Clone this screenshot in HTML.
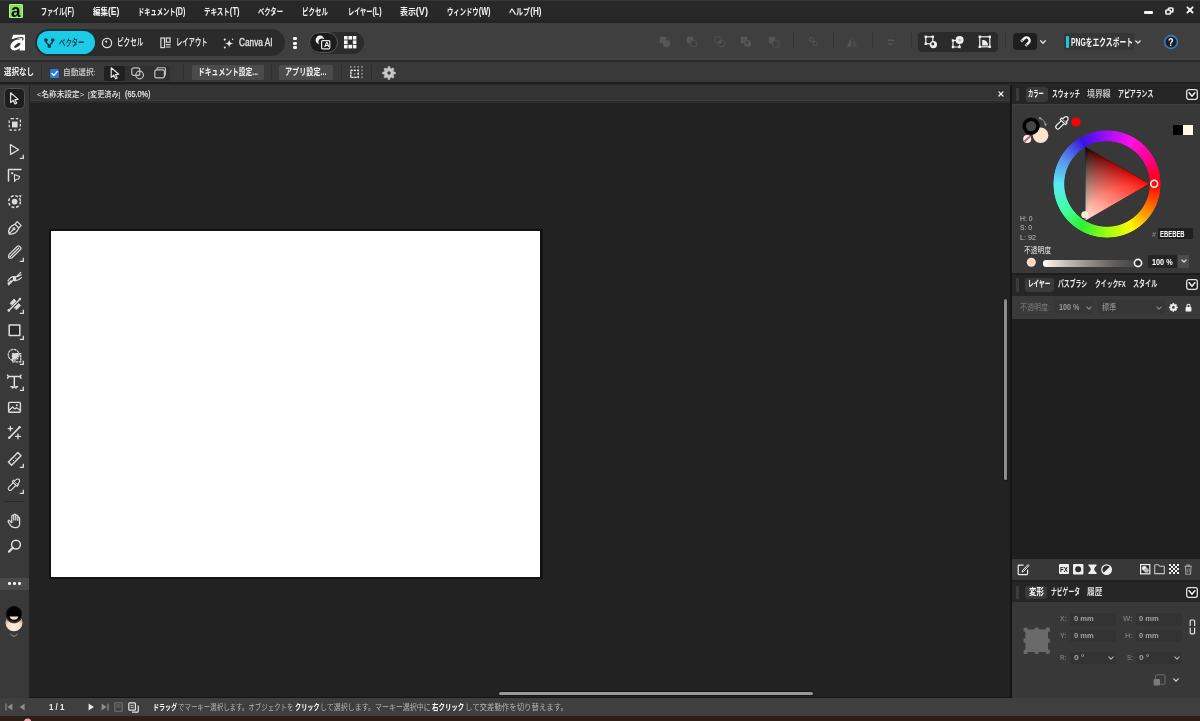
<!DOCTYPE html>
<html lang="ja">
<head>
<meta charset="utf-8">
<title>Affinity</title>
<style>
*{box-sizing:border-box;margin:0;padding:0}
html,body{width:1200px;height:721px;overflow:hidden;background:#222}
body{position:relative;font-family:"Liberation Sans","Noto Sans CJK JP",sans-serif;color:#e6e6e6;font-size:10px;line-height:1}
.a{position:absolute}
.t{position:absolute;white-space:nowrap;transform-origin:0 50%;display:block}
svg{position:absolute;overflow:visible}

</style>
</head>
<body>
<!-- main blocks -->
<div class="a" style="left:0px;top:0px;width:1200px;height:23px;background:#282828;"></div>
<div class="a" style="left:0px;top:0px;width:1200px;height:1px;background:#363636;"></div>
<div class="a" style="left:0px;top:19.5px;width:1200px;height:3.5px;background:#242424;"></div>
<div class="a" style="left:0px;top:23px;width:1200px;height:38px;background:#3f3f3f;"></div>
<div class="a" style="left:0px;top:58px;width:1200px;height:1.6px;background:#444444;"></div>
<div class="a" style="left:0px;top:60.2px;width:1200px;height:1.8px;background:#2b2b2b;"></div>
<div class="a" style="left:0px;top:62px;width:1200px;height:20.2px;background:#393939;"></div>
<div class="a" style="left:0px;top:82px;width:1200px;height:1.6px;background:#1e1e1e;"></div>
<div class="a" style="left:0px;top:83.6px;width:1200px;height:1.4px;background:#2a2a2a;"></div>
<div class="a" style="left:0px;top:85px;width:28.5px;height:612.5px;background:#393939;"></div>
<div class="a" style="left:28.5px;top:85px;width:1px;height:612.5px;background:#232323;"></div>
<div class="a" style="left:29.5px;top:85px;width:980px;height:18px;background:#333333;"></div>
<div class="a" style="left:29.5px;top:99.8px;width:980px;height:1.6px;background:#3a3a3a;"></div>
<div class="a" style="left:29.5px;top:101.4px;width:980px;height:1.6px;background:#2b2b2b;"></div>
<div class="a" style="left:29.5px;top:103px;width:980px;height:594.5px;background:#222222;"></div>
<div class="a" style="left:1009.5px;top:85px;width:2.5px;height:612.5px;background:#151515;"></div>
<div class="a" style="left:1011.8px;top:85px;width:188.2px;height:612.5px;background:#383838;"></div>
<div class="a" style="left:0px;top:697.5px;width:1200px;height:18.5px;background:#3f3f3f;"></div>
<div class="a" style="left:0px;top:715.6px;width:1200px;height:5.4px;background:#2f1e14;"></div>
<div class="a" style="left:49.1px;top:229px;width:493.8px;height:350px;background:#121212;"></div>
<div class="a" style="left:50.8px;top:230.5px;width:489.5px;height:346.6px;background:#ffffff;"></div>
<!-- menu -->
<div class="a" style="left:9px;top:4px;width:13.7px;height:13.6px;background:#84e256;border-radius:1px;border:1px solid #b4f48c"></div>
<span class="t" style="left:11.3px;top:-2.30px;font-size:17.6px;line-height:26.400000000000002px;color:#060606;font-weight:700;transform:scaleX(0.9697);">a</span>
<span class="t" style="left:41px;top:6.33px;font-size:9.3px;line-height:13.950000000000001px;color:#f2f2f2;font-weight:700;transform:scaleX(0.6477);">ファイル<span style="font-size:116%;line-height:1px">(F)</span></span>
<span class="t" style="left:93px;top:6.33px;font-size:9.3px;line-height:13.950000000000001px;color:#f2f2f2;font-weight:700;transform:scaleX(0.8038);">編集<span style="font-size:116%;line-height:1px">(E)</span></span>
<span class="t" style="left:138px;top:6.33px;font-size:9.3px;line-height:13.950000000000001px;color:#f2f2f2;font-weight:700;transform:scaleX(0.6714);">ドキュメント<span style="font-size:116%;line-height:1px">(D)</span></span>
<span class="t" style="left:204px;top:6.33px;font-size:9.3px;line-height:13.950000000000001px;color:#f2f2f2;font-weight:700;transform:scaleX(0.7006);">テキスト<span style="font-size:116%;line-height:1px">(T)</span></span>
<span class="t" style="left:258px;top:6.33px;font-size:9.3px;line-height:13.950000000000001px;color:#f2f2f2;font-weight:700;transform:scaleX(0.6788);">ベクター</span>
<span class="t" style="left:302px;top:6.33px;font-size:9.3px;line-height:13.950000000000001px;color:#f2f2f2;font-weight:700;transform:scaleX(0.6989);">ピクセル</span>
<span class="t" style="left:347.5px;top:6.33px;font-size:9.3px;line-height:13.950000000000001px;color:#f2f2f2;font-weight:700;transform:scaleX(0.6611);">レイヤー<span style="font-size:116%;line-height:1px">(L)</span></span>
<span class="t" style="left:400px;top:6.33px;font-size:9.3px;line-height:13.950000000000001px;color:#f2f2f2;font-weight:700;transform:scaleX(0.8493);">表示<span style="font-size:116%;line-height:1px">(V)</span></span>
<span class="t" style="left:446.5px;top:6.33px;font-size:9.3px;line-height:13.950000000000001px;color:#f2f2f2;font-weight:700;transform:scaleX(0.6814);">ウィンドウ<span style="font-size:116%;line-height:1px">(W)</span></span>
<span class="t" style="left:508.5px;top:6.33px;font-size:9.3px;line-height:13.950000000000001px;color:#f2f2f2;font-weight:700;transform:scaleX(0.7583);">ヘルプ<span style="font-size:116%;line-height:1px">(H)</span></span>
<div class="a" style="left:1144.2px;top:11.2px;width:8.6px;height:2.7px;background:#f4f4f4;border-radius:1px"></div>
<svg style="left:1164px;top:5.6px" width="11" height="9" viewBox="0 0 11 9"><rect x="4.3" y="2" width="4.6" height="4" rx="1.1" fill="none" stroke="#f0f0f0" stroke-width="1.7"/><rect x="1.9" y="4" width="4.6" height="4" rx="1.1" fill="#282828" stroke="#f0f0f0" stroke-width="1.7"/></svg>
<svg style="left:1185px;top:5px" width="10" height="10" viewBox="0 0 10 10"><path d="M2.4 2.3 L7.6 7.5 M7.6 2.3 L2.4 7.5" stroke="#f4f4f4" stroke-width="1.8" stroke-linecap="round"/></svg>
<!-- toolbar -->
<svg style="left:9px;top:34px" width="17" height="17" viewBox="0 0 17 17"><g transform="translate(-9 -34)"><path d="M13.2 34.7 H25 V50.5 H19.6 V39 H11.6 Z" fill="#fff"/><ellipse cx="16.3" cy="45" rx="6.5" ry="4.7" transform="rotate(-36 16.3 45)" fill="#fff"/><ellipse cx="17.3" cy="45.3" rx="3.7" ry="1.45" transform="rotate(-36 17.3 45.3)" fill="#303030"/><path d="M11.4 41.6 C13.4 38.8 17.6 37.7 21.4 37.5 C23 37.5 23.6 38.6 22.6 39.8" fill="none" stroke="#303030" stroke-width="1.15" stroke-linecap="round"/></g></svg>
<div class="a" style="left:35px;top:28.5px;width:250px;height:27.8px;background:#2b2b2b;border-radius:14px"></div>
<div class="a" style="left:36px;top:30px;width:60px;height:25px;background:#12323a;border-radius:12.5px"></div>
<div class="a" style="left:37px;top:31px;width:58px;height:23px;background:#1ccbe8;border-radius:11.5px"></div>
<svg style="left:44px;top:38.4px" width="11" height="11" viewBox="0 0 11 11"><g fill="none" stroke="#0c3a46" stroke-width="1.4"><path d="M1.9 2.4 C1.9 6.6 5.3 5.6 5.3 8.2 C5.3 5.6 8.7 6.6 8.7 2.4"/></g><g fill="#0c3a46"><rect x="0.2" y="0.4" width="3.4" height="3.2" rx="0.8"/><rect x="7" y="0.4" width="3.4" height="3.2" rx="0.8"/><rect x="3.6" y="6.6" width="3.4" height="3.2" rx="0.8"/></g></svg>
<span class="t" style="left:59.2px;top:35.60px;font-size:9.6px;line-height:14.399999999999999px;color:#0c4250;font-weight:700;transform:scaleX(0.6684);">ベクター</span>
<svg style="left:101px;top:37px" width="12" height="12" viewBox="0 0 12 12"><circle cx="6" cy="6" r="4.6" fill="none" stroke="#dcdcdc" stroke-width="1.3"/><path d="M6 6 L6 3.4 A2.6 2.6 0 0 0 3.7 4.8 Z" fill="#dcdcdc"/></svg>
<span class="t" style="left:117px;top:35.10px;font-size:10px;line-height:15.0px;color:#dedede;font-weight:700;transform:scaleX(0.6625);">ピクセル</span>
<svg style="left:160px;top:37px" width="11" height="12" viewBox="0 0 11 12"><rect x="0.9" y="1" width="3.6" height="9.6" fill="none" stroke="#dcdcdc" stroke-width="1.2"/><rect x="6.3" y="1" width="3.8" height="4.2" fill="none" stroke="#dcdcdc" stroke-width="1.2"/><path d="M5.8 7.6 H10.6 M5.8 10 H10.6" stroke="#dcdcdc" stroke-width="1.2"/></svg>
<span class="t" style="left:175.5px;top:35.10px;font-size:10px;line-height:15.0px;color:#dedede;font-weight:700;transform:scaleX(0.6300);">レイアウト</span>
<svg style="left:223px;top:38px" width="11" height="11" viewBox="0 0 11 11"><path d="M6.2 1.2 C6.6 4 7.4 4.9 10.4 5.4 C7.4 5.9 6.6 6.8 6.2 9.8 C5.8 6.8 5 5.9 2 5.4 C5 4.9 5.8 4 6.2 1.2 Z" fill="#e4e4e4"/><circle cx="1.8" cy="1.6" r="1.1" fill="#e4e4e4"/><circle cx="1.8" cy="9.4" r="1" fill="#e4e4e4"/><circle cx="9.6" cy="1.2" r="0.7" fill="#e4e4e4"/></svg>
<span class="t" style="left:239px;top:35.05px;font-size:10.2px;line-height:15.299999999999999px;color:#e0e0e0;font-weight:400;transform:scaleX(0.8103);-webkit-text-stroke:0.35px #e0e0e0">Canva AI</span>
<div class="a" style="left:293.4px;top:37.1px;width:3.2px;height:3.2px;background:#f6f6f6;border-radius:1.2px"></div>
<div class="a" style="left:293.4px;top:41.5px;width:3.2px;height:3.2px;background:#f6f6f6;border-radius:1.2px"></div>
<div class="a" style="left:293.4px;top:45.9px;width:3.2px;height:3.2px;background:#f6f6f6;border-radius:1.2px"></div>
<div class="a" style="left:308.5px;top:31.5px;width:55.5px;height:22px;background:#2b2b2b;border-radius:11px"></div>
<div class="a" style="left:309px;top:32px;width:28.5px;height:21px;background:#1c1c1c;border-radius:10.5px;border:1px solid #5a5a5a"></div>
<svg style="left:314px;top:34px" width="18" height="17" viewBox="0 0 18 17"><circle cx="6" cy="6" r="4.4" fill="#f2f2f2"/><circle cx="8" cy="8" r="3.6" fill="#1c1c1c"/><rect x="7.6" y="6.6" width="8.2" height="8.2" rx="1" fill="#1c1c1c" stroke="#e8e8e8" stroke-width="1.2"/></svg>
<span class="t" style="left:323.7px;top:40.02px;font-size:6.5px;line-height:9.75px;color:#f0f0f0;font-weight:700;transform:scaleX(1.1907);">A</span>
<svg style="left:343.8px;top:36px" width="13" height="13" viewBox="0 0 13 13"><rect x="0.0" y="0.0" width="3.6" height="3.6" fill="#f4f4f4"/><rect x="4.4" y="0.0" width="3.6" height="3.6" fill="#f4f4f4"/><rect x="8.8" y="0.0" width="3.6" height="3.6" fill="#f4f4f4"/><rect x="0.0" y="4.4" width="3.6" height="3.6" fill="#f4f4f4"/><rect x="8.8" y="4.4" width="3.6" height="3.6" fill="#f4f4f4"/><rect x="0.0" y="8.8" width="3.6" height="3.6" fill="#f4f4f4"/><rect x="4.4" y="8.8" width="3.6" height="3.6" fill="#f4f4f4"/><rect x="8.8" y="8.8" width="3.6" height="3.6" fill="#f4f4f4"/></svg>
<svg style="left:656.5px;top:33.6px" width="16" height="16" viewBox="0 0 16 16"><g transform="translate(8 8) scale(.8) translate(-8 -8)"><rect x="1.5" y="1.5" width="8" height="8" rx="1" fill="#565656"/><circle cx="10" cy="10" r="4.6" fill="#565656"/></g></svg>
<svg style="left:684px;top:33.6px" width="16" height="16" viewBox="0 0 16 16"><g transform="translate(8 8) scale(.8) translate(-8 -8)"><rect x="1.5" y="1.5" width="8" height="8" rx="1" fill="#565656"/><circle cx="10" cy="10" r="4.2" fill="#3f3f3f" stroke="#565656" stroke-width="1"/></g></svg>
<svg style="left:711.5px;top:33.6px" width="16" height="16" viewBox="0 0 16 16"><g transform="translate(8 8) scale(.8) translate(-8 -8)"><rect x="1.5" y="1.5" width="8" height="8" rx="1" fill="none" stroke="#565656" stroke-width="1"/><circle cx="10" cy="10" r="4.2" fill="none" stroke="#565656" stroke-width="1"/><path d="M5.8 9.5 H9.5 V5.8 A4.2 4.2 0 0 0 5.8 9.5 Z" fill="#565656"/></g></svg>
<svg style="left:738px;top:33.6px" width="16" height="16" viewBox="0 0 16 16"><g transform="translate(8 8) scale(.8) translate(-8 -8)"><rect x="1.5" y="1.5" width="8" height="8" rx="1" fill="#565656"/><circle cx="10" cy="10" r="4.4" fill="#565656"/><circle cx="9" cy="8.6" r="2" fill="#3f3f3f"/></g></svg>
<svg style="left:766px;top:33.6px" width="16" height="16" viewBox="0 0 16 16"><g transform="translate(8 8) scale(.8) translate(-8 -8)"><rect x="1.5" y="1.5" width="8" height="8" rx="1" fill="#565656"/><rect x="6.5" y="6.5" width="8" height="8" rx="1" fill="#3f3f3f" stroke="#565656" stroke-width="1"/></g></svg>
<div class="a" style="left:793px;top:32px;width:1px;height:17px;background:#343434;"></div>
<div class="a" style="left:833px;top:32px;width:1px;height:17px;background:#343434;"></div>
<div class="a" style="left:872px;top:32px;width:1px;height:17px;background:#343434;"></div>
<div class="a" style="left:911px;top:32px;width:1px;height:17px;background:#343434;"></div>
<div class="a" style="left:1005px;top:32px;width:1px;height:17px;background:#343434;"></div>
<svg style="left:804.5px;top:33.6px" width="16" height="16" viewBox="0 0 16 16"><g transform="translate(8 8) scale(.8) translate(-8 -8)"><circle cx="6" cy="5" r="2.6" fill="none" stroke="#565656" stroke-width="1.2"/><circle cx="11" cy="10" r="2.6" fill="none" stroke="#565656" stroke-width="1.2"/><path d="M8 7 L9 8" stroke="#565656" stroke-width="1.2"/></g></svg>
<svg style="left:844px;top:33.6px" width="16" height="16" viewBox="0 0 16 16"><g transform="translate(8 8) scale(.8) translate(-8 -8)"><path d="M7 3 V14 H1.5 Z" fill="#565656"/><path d="M9.5 3 V14 H14.5 Z" fill="#4d4d4d"/></g></svg>
<svg style="left:883px;top:33.6px" width="16" height="16" viewBox="0 0 16 16"><g transform="translate(8 8) scale(.8) translate(-8 -8)"><path d="M4 6 H12 M4 10.5 H10" stroke="#565656" stroke-width="2"/></g></svg>
<div class="a" style="left:918px;top:32px;width:79.5px;height:19.5px;background:#2b2b2b;border-radius:4px"></div>
<svg style="left:924px;top:35px" width="14" height="14" viewBox="0 0 14 14"><rect x="1.8" y="1.8" width="7" height="7" fill="none" stroke="#efefef" stroke-width="1.2"/><g fill="#efefef"><rect x="0.6" y="0.6" width="2.4" height="2.4"/><rect x="7.6" y="0.6" width="2.4" height="2.4"/><rect x="0.6" y="7.6" width="2.4" height="2.4"/></g><circle cx="9.4" cy="9.6" r="3.6" fill="#efefef"/><circle cx="8.8" cy="9" r="1.4" fill="#2b2b2b"/></svg>
<svg style="left:951px;top:35px" width="14" height="14" viewBox="0 0 14 14"><path d="M2 5.5 H5 M2 5.5 V12 H8.5 V9.5" fill="none" stroke="#efefef" stroke-width="1.2"/><g fill="#efefef"><rect x="0.8" y="4.3" width="2.4" height="2.4"/><rect x="0.8" y="10.8" width="2.4" height="2.4"/><rect x="7.3" y="10.8" width="2.4" height="2.4"/></g><circle cx="8.6" cy="5" r="4" fill="#efefef"/><circle cx="8.6" cy="5" r="1.5" fill="#bdbdbd"/></svg>
<svg style="left:978px;top:35px" width="14" height="14" viewBox="0 0 14 14"><rect x="1.8" y="1.8" width="10" height="10" fill="none" stroke="#efefef" stroke-width="1.2"/><g fill="#efefef"><rect x="0.6" y="0.6" width="2.4" height="2.4"/><rect x="10.6" y="0.6" width="2.4" height="2.4"/><rect x="0.6" y="10.6" width="2.4" height="2.4"/><rect x="10.6" y="10.6" width="2.4" height="2.4"/></g><path d="M4.2 5 C8 5 10 7 10 10.6 H4.2 Z" fill="#efefef"/></svg>
<div class="a" style="left:1012.5px;top:32.5px;width:24px;height:17.5px;background:#1e1e1e;border-radius:4px"></div>
<svg style="left:1017px;top:34px" width="14" height="14" viewBox="0 0 14 14"><path d="M4.1 7.5 L7.3 4.3 A3.1 3.1 0 0 1 11.7 8.7 L8.5 11.9" fill="none" stroke="#efefef" stroke-width="2.5"/><path d="M4.2 5.6 L6.2 7.6 M8.4 9.8 L10.4 11.8" stroke="#1e1e1e" stroke-width="0.9"/></svg>
<svg style="left:1039.3px;top:37.7px" width="8" height="8" viewBox="0 0 8 8"><path d="M1.7000000000000002 2.85 L4 5.15 L6.3 2.85" fill="none" stroke="#dcdcdc" stroke-width="1.4" stroke-linecap="round" stroke-linejoin="round"/></svg>
<div class="a" style="left:1063.5px;top:32.5px;width:70.5px;height:17.5px;background:#363636;border-radius:2px"></div>
<div class="a" style="left:1065.5px;top:36px;width:3.2px;height:12px;background:#19c8e6;border-radius:1px"></div>
<span class="t" style="left:1070.5px;top:34.55px;font-size:10.2px;line-height:15.299999999999999px;color:#f4f4f4;font-weight:700;transform:scaleX(0.6660);">PNGをエクスポート</span>
<svg style="left:1134.3px;top:38px" width="8" height="8" viewBox="0 0 8 8"><path d="M1.7999999999999998 2.9 L4 5.1 L6.2 2.9" fill="none" stroke="#dcdcdc" stroke-width="1.4" stroke-linecap="round" stroke-linejoin="round"/></svg>
<svg style="left:1163px;top:34px" width="16" height="16" viewBox="0 0 16 16"><circle cx="8" cy="8" r="6.4" fill="#1e1e1e" stroke="#2f7fd8" stroke-width="1.6"/></svg>
<span class="t" style="left:1168.2px;top:34.60px;font-size:10px;line-height:15.0px;color:#ffffff;font-weight:700;transform:scaleX(0.9166);">?</span>
<!-- context bar -->
<span class="t" style="left:4px;top:66.40px;font-size:9.2px;line-height:13.799999999999999px;color:#f2f2f2;font-weight:700;transform:scaleX(0.8163);">選択なし</span>
<div class="a" style="left:41px;top:65px;width:1px;height:15px;background:#2e2e2e;"></div>
<div class="a" style="left:183px;top:65px;width:1px;height:15px;background:#2e2e2e;"></div>
<div class="a" style="left:271px;top:65px;width:1px;height:15px;background:#2e2e2e;"></div>
<div class="a" style="left:340.5px;top:65px;width:1px;height:15px;background:#2e2e2e;"></div>
<div class="a" style="left:371px;top:65px;width:1px;height:15px;background:#2e2e2e;"></div>
<div class="a" style="left:50px;top:69px;width:9px;height:9px;background:#2b7bd8;border-radius:1.5px"></div>
<svg style="left:50px;top:69px" width="9" height="9" viewBox="0 0 9 9"><path d="M2 4.6 L3.9 6.4 L7.2 2.6" fill="none" stroke="#fff" stroke-width="1.4" stroke-linecap="round" stroke-linejoin="round"/></svg>
<span class="t" style="left:62.7px;top:67.12px;font-size:8.1px;line-height:12.149999999999999px;color:#d4d4d4;font-weight:500;transform:scaleX(0.9444);">自動選択:</span>
<div class="a" style="left:104px;top:65.5px;width:66px;height:15px;background:#303030;border-radius:2px"></div>
<div class="a" style="left:104px;top:65.5px;width:21px;height:15px;background:#202020;border-radius:2px"></div>
<svg style="left:110px;top:67px" width="10" height="13" viewBox="0 0 10 13"><path d="M1.2 0.8 L1.2 10.4 L3.8 8.2 L5.6 11.8 L7.2 11 L5.5 7.6 L8.8 7.3 Z" fill="none" stroke="#e8e8e8" stroke-width="1.15" stroke-linejoin="round"/></svg>
<svg style="left:131px;top:66.5px" width="14" height="13" viewBox="0 0 14 13"><rect x="0.8" y="0.8" width="8" height="7.6" rx="2" fill="none" stroke="#c4c4c4" stroke-width="1.2"/><circle cx="8.6" cy="8" r="3.8" fill="none" stroke="#c4c4c4" stroke-width="1.2"/></svg>
<svg style="left:154px;top:67px" width="13" height="12" viewBox="0 0 13 12"><path d="M3 2.6 V1.6 Q3 0.8 3.8 0.8 H10.6 Q11.4 0.8 11.4 1.6 V8.6" fill="none" stroke="#c4c4c4" stroke-width="1.1"/><rect x="0.8" y="2.8" width="9.6" height="8" rx="1.6" fill="none" stroke="#c4c4c4" stroke-width="1.2"/></svg>
<div class="a" style="left:191.5px;top:65px;width:72.5px;height:14.5px;background:#4b4b4b;border-radius:1.5px"></div>
<span class="t" style="left:197.5px;top:65.40px;font-size:9.6px;line-height:14.399999999999999px;color:#f2f2f2;font-weight:700;transform:scaleX(0.7080);">ドキュメント設定...</span>
<div class="a" style="left:279px;top:65px;width:54px;height:14.5px;background:#4b4b4b;border-radius:1.5px"></div>
<span class="t" style="left:285px;top:65.40px;font-size:9.6px;line-height:14.399999999999999px;color:#f2f2f2;font-weight:700;transform:scaleX(0.7415);">アプリ設定...</span>
<svg style="left:350.3px;top:66.2px" width="13" height="12.5" viewBox="0 0 13 12.5"><rect x="0.0" y="0.0" width="1.7" height="1.7" fill="#8a8a8a"/><rect x="3.7" y="0.0" width="1.7" height="1.7" fill="#8a8a8a"/><rect x="7.4" y="0.0" width="1.7" height="1.7" fill="#8a8a8a"/><rect x="11.1" y="0.0" width="1.7" height="1.7" fill="#8a8a8a"/><rect x="0.0" y="3.5" width="1.7" height="1.7" fill="#8a8a8a"/><rect x="3.7" y="3.5" width="1.7" height="1.7" fill="#8a8a8a"/><rect x="7.4" y="3.5" width="1.7" height="1.7" fill="#8a8a8a"/><rect x="11.1" y="3.5" width="1.7" height="1.7" fill="#8a8a8a"/><rect x="0.0" y="7.0" width="1.7" height="1.7" fill="#8a8a8a"/><rect x="3.7" y="7.0" width="1.7" height="1.7" fill="#8a8a8a"/><rect x="7.4" y="7.0" width="1.7" height="1.7" fill="#8a8a8a"/><rect x="11.1" y="7.0" width="1.7" height="1.7" fill="#8a8a8a"/><rect x="0.0" y="10.5" width="1.7" height="1.7" fill="#8a8a8a"/><rect x="3.7" y="10.5" width="1.7" height="1.7" fill="#8a8a8a"/><rect x="7.4" y="10.5" width="1.7" height="1.7" fill="#8a8a8a"/><rect x="11.1" y="10.5" width="1.7" height="1.7" fill="#8a8a8a"/><rect x="0.8" y="4.3" width="7.4" height="7" fill="none" stroke="#f2f2f2" stroke-width="1.3" stroke-dasharray="2 1.2"/></svg>
<svg style="left:381.5px;top:65.7px" width="14" height="14" viewBox="0 0 14 14"><path d="M11.01 5.49 L13.46 6.30 L13.46 7.70 L11.01 8.51 L10.91 8.77 L12.06 11.07 L11.07 12.06 L8.77 10.91 L8.51 11.01 L7.70 13.46 L6.30 13.46 L5.49 11.01 L5.23 10.91 L2.93 12.06 L1.94 11.07 L3.09 8.77 L2.99 8.51 L0.54 7.70 L0.54 6.30 L2.99 5.49 L3.09 5.23 L1.94 2.93 L2.93 1.94 L5.23 3.09 L5.49 2.99 L6.30 0.54 L7.70 0.54 L8.51 2.99 L8.77 3.09 L11.07 1.94 L12.06 2.93 L10.91 5.23 Z" fill="#c8c8c8" stroke="#c8c8c8" stroke-width="0.6" stroke-linejoin="round"/><circle cx="7" cy="7" r="1.7" fill="#393939"/></svg>
<!-- doc tab -->
<span class="t" style="left:36.5px;top:88.58px;font-size:7.9px;line-height:11.850000000000001px;color:#e4e4e4;font-weight:500;transform:scaleX(0.9677);">&lt;名称未設定&gt;</span>
<span class="t" style="left:88px;top:88.58px;font-size:7.9px;line-height:11.850000000000001px;color:#e4e4e4;font-weight:500;transform:scaleX(0.9067);">[変更済み]</span>
<span class="t" style="left:125.3px;top:88.20px;font-size:8.4px;line-height:12.600000000000001px;color:#e4e4e4;font-weight:400;transform:scaleX(0.8695);-webkit-text-stroke:0.25px #e4e4e4">(65.0%)</span>
<svg style="left:997.7px;top:90.8px" width="6" height="6" viewBox="0 0 6 6"><path d="M0.9 0.9 L5 5 M5 0.9 L0.9 5" stroke="#f0f0f0" stroke-width="1.3" stroke-linecap="round"/></svg>
<div class="a" style="left:1004.1px;top:299.3px;width:3.1px;height:180.6px;background:#8e8e8e;border-radius:1.5px;box-shadow:0 0 0 1px #1a1a1a"></div>
<div class="a" style="left:499.2px;top:691.8px;width:314px;height:3px;background:#999999;border-radius:1.5px;box-shadow:0 0 0 1px #161616"></div>
<div class="a" style="left:29.5px;top:696.7px;width:980.5px;height:1px;background:#141414;"></div>
<!-- tools -->
<div class="a" style="left:4px;top:88px;width:20.5px;height:21px;background:#1e1e1e;border-radius:4.5px;border:1px solid #535353"></div>
<svg style="left:4px;top:88.0px" width="22" height="22" viewBox="0 0 22 22"><g fill="none" stroke="#dddddd" stroke-width="1.25" stroke-linejoin="round" stroke-linecap="round"><path d="M6.6 4.8 L6.6 14.6 L9.2 12.4 L11 15.9 L12.7 15.1 L10.9 11.7 L14.2 11.4 Z"/></g></svg>
<svg style="left:4px;top:113.73px" width="22" height="22" viewBox="0 0 22 22"><g fill="none" stroke="#dddddd" stroke-width="1.25" stroke-linejoin="round" stroke-linecap="round"><rect x="5.2" y="4.6" width="11.2" height="11.6" rx="2.2" stroke-dasharray="2.5 1.9" stroke-linecap="butt"/><rect x="8" y="7.6" width="5.6" height="5.8" fill="#dddddd" stroke="none"/></g></svg>
<svg style="left:4px;top:139.46px" width="22" height="22" viewBox="0 0 22 22"><g fill="none" stroke="#dddddd" stroke-width="1.25" stroke-linejoin="round" stroke-linecap="round"><path d="M6.4 5.6 L14.6 10.8 L6.6 15.4 Z"/></g><path d="M15.8 19.3 H19.3 V15.8" fill="none" stroke="#dddddd" stroke-width="1.3"/></svg>
<svg style="left:4px;top:165.19px" width="22" height="22" viewBox="0 0 22 22"><g fill="none" stroke="#dddddd" stroke-width="1.25" stroke-linejoin="round" stroke-linecap="round"><path d="M4.5 16 V4.4 H17" stroke-width="1.5"/><rect x="7.2" y="7.2" width="2" height="2" fill="#dddddd" stroke="none"/><path d="M10.4 9.6 L10.6 16.4 L12.2 14.2 L14.6 14 L15.6 11.6 Z" stroke-width="1.1"/></g></svg>
<svg style="left:4px;top:190.92000000000002px" width="22" height="22" viewBox="0 0 22 22"><g fill="none" stroke="#dddddd" stroke-width="1.25" stroke-linejoin="round" stroke-linecap="round"><circle cx="10.6" cy="10.6" r="5.9" stroke-dasharray="2.9 1.73" stroke-width="1.5" stroke-linecap="butt"/><circle cx="10.6" cy="10.6" r="2.9" fill="#dddddd" stroke="none"/><path d="M14.6 4.6 L17.4 4 L16.8 6.8 Z" fill="#dddddd" stroke="none"/></g></svg>
<svg style="left:4px;top:216.65px" width="22" height="22" viewBox="0 0 22 22"><g fill="none" stroke="#dddddd" stroke-width="1.25" stroke-linejoin="round" stroke-linecap="round"><path d="M5 16.8 C4 13 6.2 9.2 11 7.2 L14.8 11 C12.8 15.8 9 17.6 5 16.8 Z M11 7.2 L13.2 4.6 L17.2 8.6 L14.8 11 M5.2 16.6 L9.4 12.4"/><circle cx="10" cy="11.8" r="0.9"/></g></svg>
<svg style="left:4px;top:242.38px" width="22" height="22" viewBox="0 0 22 22"><g fill="none" stroke="#dddddd" stroke-width="1.25" stroke-linejoin="round" stroke-linecap="round"><path d="M4.6 15.4 L4.9 12.6 L13.4 4.2 Q14.4 3.4 15.4 4.2 L16.6 5.4 Q17.4 6.4 16.6 7.4 L8 15.8 L5.2 16.2 Z M6.2 14.6 L14.6 6.2"/></g><path d="M15.8 19.3 H19.3 V15.8" fill="none" stroke="#dddddd" stroke-width="1.3"/></svg>
<svg style="left:4px;top:268.11px" width="22" height="22" viewBox="0 0 22 22"><g fill="none" stroke="#dddddd" stroke-width="1.25" stroke-linejoin="round" stroke-linecap="round"><path d="M4 13 C6 9.4 8.6 8.2 10.6 8.6 C13 9.2 15 8.4 17.2 6.8 M4 15.6 C6.4 12.6 8.6 12.2 10.6 12.6 C13 13.2 15.4 11.6 17.4 9.6 M4.6 16.8 L16.8 4.4"/><rect x="9" y="9" width="3" height="3" fill="#dddddd" stroke="none"/></g></svg>
<svg style="left:4px;top:293.84000000000003px" width="22" height="22" viewBox="0 0 22 22"><g fill="none" stroke="#dddddd" stroke-width="1.25" stroke-linejoin="round" stroke-linecap="round"><path d="M4.8 16.6 L15.8 5.2" stroke-width="1.5"/><path d="M6.2 9.2 L10 5 L12 7 L8 11 Z M10.6 13.6 L14.6 9.6 L16.6 11.6 L12.6 15.6 Z" fill="#dddddd" stroke-width="0.8"/><circle cx="4.8" cy="16.4" r="1.3" fill="#dddddd" stroke="none"/><circle cx="16" cy="5" r="1.2" fill="#dddddd" stroke="none"/></g><path d="M15.8 19.3 H19.3 V15.8" fill="none" stroke="#dddddd" stroke-width="1.3"/></svg>
<svg style="left:4px;top:319.57px" width="22" height="22" viewBox="0 0 22 22"><g fill="none" stroke="#dddddd" stroke-width="1.25" stroke-linejoin="round" stroke-linecap="round"><rect x="5.2" y="5" width="10.6" height="10.6" fill="#2a2c2c" stroke-width="1.5"/></g><path d="M15.8 19.3 H19.3 V15.8" fill="none" stroke="#dddddd" stroke-width="1.3"/></svg>
<svg style="left:4px;top:345.3px" width="22" height="22" viewBox="0 0 22 22"><g fill="none" stroke="#dddddd" stroke-width="1.25" stroke-linejoin="round" stroke-linecap="round"><circle cx="9.6" cy="9.8" r="5.4" stroke-dasharray="1.6 1.6"/><rect x="8.4" y="8.6" width="8.4" height="8.2" stroke-dasharray="1.8 1.5"/><path d="M8.6 8.8 H14.6 C14.6 11.8 12.6 14.6 8.6 14.8 Z" fill="#dddddd" stroke="none"/></g><path d="M15.8 19.3 H19.3 V15.8" fill="none" stroke="#dddddd" stroke-width="1.3"/></svg>
<svg style="left:4px;top:371.03000000000003px" width="22" height="22" viewBox="0 0 22 22"><g fill="none" stroke="#dddddd" stroke-width="1.25" stroke-linejoin="round" stroke-linecap="round"><path d="M4.6 5.6 H16 M10.3 5.6 V15.6 M4.6 5.6 L3.6 4.2 M4.6 5.6 L3.6 7.2 M16 5.6 L17 4.2 M16 5.6 L17 7.2 M10.3 15.6 L8.6 17 M10.3 15.6 L12 17 M7 15.8 H8.4 M12.2 15.8 H13.6" stroke-width="1.5"/></g><path d="M15.8 19.3 H19.3 V15.8" fill="none" stroke="#dddddd" stroke-width="1.3"/></svg>
<svg style="left:4px;top:396.76px" width="22" height="22" viewBox="0 0 22 22"><g fill="none" stroke="#dddddd" stroke-width="1.25" stroke-linejoin="round" stroke-linecap="round"><rect x="4.6" y="5.4" width="11.8" height="9.8" rx="1" stroke-width="1.4"/><path d="M5.4 13 L8.6 10 L10.8 12 L12.6 10.8 L15.8 13" stroke-width="1.2"/><circle cx="12.8" cy="8.2" r="1" fill="#dddddd" stroke="none"/></g></svg>
<svg style="left:4px;top:422.49px" width="22" height="22" viewBox="0 0 22 22"><g fill="none" stroke="#dddddd" stroke-width="1.25" stroke-linejoin="round" stroke-linecap="round"><path d="M5.4 15.6 L15.4 5.4" stroke-width="1.5"/><path d="M4.2 6.6 H8.6 M6.4 4.4 V8.8 M11.6 14.4 H16.4 M14 12 V16.8" stroke-width="1.3"/><circle cx="5.2" cy="15.8" r="1.2" fill="#dddddd" stroke="none"/><circle cx="15.6" cy="5.2" r="1.2" fill="#dddddd" stroke="none"/></g></svg>
<svg style="left:4px;top:448.22px" width="22" height="22" viewBox="0 0 22 22"><g fill="none" stroke="#dddddd" stroke-width="1.25" stroke-linejoin="round" stroke-linecap="round"><path d="M4.4 14 L13.8 4.6 L17 7.8 L7.6 17.2 Z" stroke-width="1.4"/><path d="M9.2 12.2 L9.8 12.8 M11.4 10 L12 10.6" stroke-width="1"/></g><path d="M15.8 19.3 H19.3 V15.8" fill="none" stroke="#dddddd" stroke-width="1.3"/></svg>
<svg style="left:4px;top:473.95px" width="22" height="22" viewBox="0 0 22 22"><g fill="none" stroke="#dddddd" stroke-width="1.25" stroke-linejoin="round" stroke-linecap="round"><g transform="translate(10.4 10.2) rotate(45) scale(0.92) translate(0 -2)" fill="#2e2e2e"><path d="M-2 2 V8.6 Q-2 10.6 0 10.6 Q2 10.6 2 8.6 V2" /><path d="M-3.7 1.6 H3.7 V-0.6 H-3.7 Z" /><path d="M-2.5 -0.6 L-2 -3.8 Q0 -6.6 2 -3.8 L2.5 -0.6" /></g></g><path d="M15.8 19.3 H19.3 V15.8" fill="none" stroke="#dddddd" stroke-width="1.3"/></svg>
<div class="a" style="left:4px;top:501px;width:20px;height:1px;background:#2a2a2a;"></div>
<svg style="left:4px;top:510px" width="22" height="22" viewBox="0 0 22 22"><g fill="none" stroke="#dddddd" stroke-width="1.25" stroke-linejoin="round" stroke-linecap="round"><path d="M7.2 12.4 L5.6 10.6 Q4.6 9.8 4.2 10.8 Q4 11.6 4.6 12.6 L7 16 Q8.4 17.6 10.8 17.6 H11.6 Q15.6 17.6 15.6 13.4 V8.2 Q15.6 7 14.6 7 Q13.8 7 13.8 8.2 M13.8 10.4 V6.2 Q13.8 5 12.8 5 Q11.8 5 11.8 6.2 V10 M11.8 6.2 V5.2 Q11.8 4 10.8 4 Q9.8 4 9.8 5.2 V10 M9.8 6.4 Q9.8 5.2 8.8 5.2 Q7.8 5.2 7.8 6.4 V12.6"/></g></svg>
<svg style="left:4px;top:535.5px" width="22" height="22" viewBox="0 0 22 22"><g fill="none" stroke="#dddddd" stroke-width="1.25" stroke-linejoin="round" stroke-linecap="round"><circle cx="12" cy="8.6" r="4.4" stroke-width="1.5"/><path d="M8.8 11.8 L5 15.6" stroke-width="2.2"/></g></svg>
<div class="a" style="left:0px;top:577.5px;width:29px;height:12.5px;background:#4a4a4a;"></div>
<div class="a" style="left:8.2px;top:582.3px;width:2.8px;height:2.8px;background:#f4f4f4;border-radius:1.2px"></div>
<div class="a" style="left:13.2px;top:582.3px;width:2.8px;height:2.8px;background:#f4f4f4;border-radius:1.2px"></div>
<div class="a" style="left:18.2px;top:582.3px;width:2.8px;height:2.8px;background:#f4f4f4;border-radius:1.2px"></div>
<svg style="left:4px;top:604px" width="20" height="36" viewBox="0 0 20 36"><defs><radialGradient id="gpe" cx="50%" cy="75%" r="60%"><stop offset="0" stop-color="#fff3e6"/><stop offset="0.7" stop-color="#f6d7be"/><stop offset="1" stop-color="#b49680"/></radialGradient><radialGradient id="gbk" cx="50%" cy="45%" r="55%"><stop offset="0" stop-color="#000"/><stop offset="0.72" stop-color="#050505"/><stop offset="1" stop-color="#555"/></radialGradient></defs><circle cx="10" cy="18.6" r="8.6" fill="url(#gpe)"/><circle cx="10" cy="10.6" r="8.8" fill="url(#gbk)"/><path d="M5.6 12.6 A4.6 4.6 0 0 0 14.4 12.6 Z" fill="#f6dcc6"/><path d="M6.4 30 Q10 34.4 13.6 30" fill="none" stroke="#9a9a9a" stroke-width="1"/></svg>
<!-- right panel -->
<div class="a" style="left:1011.8px;top:85px;width:188.2px;height:19.2px;background:#262626;"></div>
<div class="a" style="left:1015.8px;top:87.5px;width:3px;height:13.5px;background:#3c3c3c;border-radius:1px"></div>
<div class="a" style="left:1025.5px;top:87px;width:22.5px;height:14.5px;background:#3a3a3a;border-radius:3px"></div>
<span class="t" style="left:1028.3px;top:87.80px;font-size:8.8px;line-height:13.200000000000001px;color:#ffffff;font-weight:700;transform:scaleX(0.5946);">カラー</span>
<span class="t" style="left:1051.5px;top:87.80px;font-size:8.8px;line-height:13.200000000000001px;color:#ededed;font-weight:700;transform:scaleX(0.6409);">スウォッチ</span>
<span class="t" style="left:1087.3px;top:87.80px;font-size:8.8px;line-height:13.200000000000001px;color:#bdbdbd;font-weight:700;transform:scaleX(0.8975);">境界線</span>
<span class="t" style="left:1118px;top:87.80px;font-size:8.8px;line-height:13.200000000000001px;color:#ededed;font-weight:700;transform:scaleX(0.6710);">アピアランス</span>
<svg style="left:1186px;top:88.7px" width="12" height="11" viewBox="0 0 12 11"><rect x="0.7" y="0.7" width="10.6" height="9.6" rx="2" fill="#1c1c1c" stroke="#e4e4e4" stroke-width="1.3"/><path d="M3.2 3.7 L6 7.2 L8.8 3.7" fill="none" stroke="#f2f2f2" stroke-width="1.5" stroke-linecap="round" stroke-linejoin="round"/></svg>
<div class="a" style="left:1011.8px;top:104.2px;width:1.5px;height:168.3px;background:#3e3e3e;"></div>
<div class="a" style="left:1011.8px;top:104.2px;width:188.2px;height:1px;background:#3e3e3e;"></div>
<svg style="left:1018px;top:112px" width="34" height="34" viewBox="0 0 34 34"><circle cx="22.6" cy="23.3" r="7.8" fill="#fde3cf"/><circle cx="13.1" cy="14.1" r="6.9" fill="#454545" stroke="#000" stroke-width="3.5"/><circle cx="9.2" cy="27.1" r="4" fill="#fdf2f2"/><path d="M6.4 29.6 L12 24.6" stroke="#d9566a" stroke-width="2"/><path d="M21.6 6.4 Q26.6 7.6 27.4 12.4" fill="none" stroke="#9c9c9c" stroke-width="1"/><path d="M20.6 5 L23.6 5.4 L22 8 Z M26 12 L29 11.6 L27.8 14.4 Z" fill="#9c9c9c"/></svg>
<svg style="left:1054px;top:114px" width="18" height="18" viewBox="0 0 18 18"><g transform="translate(8.5 8.3) rotate(45) translate(0 -2)" fill="#2a2a2a" stroke="#ececec" stroke-width="1.3" stroke-linejoin="round"><path d="M-2 2 V8.6 Q-2 10.6 0 10.6 Q2 10.6 2 8.6 V2" /><path d="M-3.7 1.6 H3.7 V-0.6 H-3.7 Z" /><path d="M-2.5 -0.6 L-2 -3.8 Q0 -6.6 2 -3.8 L2.5 -0.6" /></g></svg>
<svg style="left:1071px;top:117px" width="10" height="10" viewBox="0 0 10 10"><circle cx="5" cy="5" r="4.6" fill="#ff0000"/></svg>
<div class="a" style="left:1173px;top:125px;width:10.3px;height:10.3px;background:#000;"></div>
<div class="a" style="left:1183.3px;top:125px;width:10px;height:10.3px;background:#fffbe2;"></div>
<div class="a" style="left:1053px;top:130px;width:107.6px;height:107.6px;border-radius:50%;background:conic-gradient(from 90deg,#ff0000,#ff7a00 8.33%,#fff800 16.67%,#9cff10 25%,#30f030 33.33%,#40ffa8 41.67%,#5ce8f4 50%,#5890ea 58.33%,#4450e6 63%,#3a14e0 66.67%,#6a10ee 71%,#a010f6 75%,#ff10e6 83.33%,#ff0088 91.67%,#ff0000);-webkit-mask:radial-gradient(circle closest-side,transparent 78.4%,#000 80%,#000 98.4%,transparent 100%);mask:radial-gradient(circle closest-side,transparent 78.4%,#000 80%,#000 98.4%,transparent 100%)"></div>
<svg style="left:1053px;top:130px" width="108" height="108" viewBox="0 0 108 108"><defs><linearGradient id="gr" gradientUnits="userSpaceOnUse" x1="96.2" y1="53.7" x2="32.4" y2="53.7"><stop offset="0" stop-color="#ff0a05" stop-opacity="1.000"/><stop offset="0.05" stop-color="#ff0a05" stop-opacity="0.969"/><stop offset="0.1" stop-color="#ff0a05" stop-opacity="0.937"/><stop offset="0.2" stop-color="#ff0a05" stop-opacity="0.871"/><stop offset="0.3" stop-color="#ff0a05" stop-opacity="0.802"/><stop offset="0.4" stop-color="#ff0a05" stop-opacity="0.729"/><stop offset="0.5" stop-color="#ff0a05" stop-opacity="0.651"/><stop offset="0.6" stop-color="#ff0a05" stop-opacity="0.567"/><stop offset="0.7" stop-color="#ff0a05" stop-opacity="0.474"/><stop offset="0.8" stop-color="#ff0a05" stop-opacity="0.369"/><stop offset="0.9" stop-color="#ff0a05" stop-opacity="0.240"/><stop offset="0.95" stop-color="#ff0a05" stop-opacity="0.156"/><stop offset="1" stop-color="#ff0a05" stop-opacity="0.000"/></linearGradient><linearGradient id="gw" gradientUnits="userSpaceOnUse" x1="32.4" y1="90.4" x2="64.3" y2="35.2"><stop offset="0" stop-color="#fce6d4" stop-opacity="1.000"/><stop offset="0.05" stop-color="#fce6d4" stop-opacity="0.955"/><stop offset="0.1" stop-color="#fce6d4" stop-opacity="0.910"/><stop offset="0.2" stop-color="#fce6d4" stop-opacity="0.818"/><stop offset="0.3" stop-color="#fce6d4" stop-opacity="0.725"/><stop offset="0.4" stop-color="#fce6d4" stop-opacity="0.631"/><stop offset="0.5" stop-color="#fce6d4" stop-opacity="0.536"/><stop offset="0.6" stop-color="#fce6d4" stop-opacity="0.438"/><stop offset="0.7" stop-color="#fce6d4" stop-opacity="0.338"/><stop offset="0.8" stop-color="#fce6d4" stop-opacity="0.235"/><stop offset="0.9" stop-color="#fce6d4" stop-opacity="0.126"/><stop offset="0.95" stop-color="#fce6d4" stop-opacity="0.067"/><stop offset="1" stop-color="#fce6d4" stop-opacity="0.000"/></linearGradient></defs><g style="isolation:isolate"><path d="M32.4 17 L96.2 53.7 L32.4 90.4 Z" fill="#000"/><path d="M32.4 17 L96.2 53.7 L32.4 90.4 Z" fill="url(#gr)" style="mix-blend-mode:plus-lighter"/><path d="M32.4 17 L96.2 53.7 L32.4 90.4 Z" fill="url(#gw)" style="mix-blend-mode:plus-lighter"/></g><circle cx="31.8" cy="84.8" r="3.2" fill="#fbe6d6" stroke="#fff4ea" stroke-width="0.8"/><circle cx="101.2" cy="53.7" r="3.5" fill="#ff1010" stroke="#fff" stroke-width="1.5"/></svg>
<span class="t" style="left:1019.5px;top:212.70px;font-size:7.6px;line-height:11.399999999999999px;color:#c2c2c2;font-weight:400;transform:scaleX(0.8969);">H: 0</span>
<span class="t" style="left:1019.5px;top:222.30px;font-size:7.6px;line-height:11.399999999999999px;color:#c2c2c2;font-weight:400;transform:scaleX(0.8879);">S: 0</span>
<span class="t" style="left:1019.5px;top:231.90px;font-size:7.6px;line-height:11.399999999999999px;color:#c2c2c2;font-weight:400;transform:scaleX(0.9473);">L: 92</span>
<span class="t" style="left:1151.5px;top:229.55px;font-size:7px;line-height:10.5px;color:#808080;font-weight:700;transform:scaleX(1.0240);">#</span>
<div class="a" style="left:1158px;top:227.5px;width:34.5px;height:11.8px;background:#202020;"></div>
<span class="t" style="left:1160px;top:227.60px;font-size:8.4px;line-height:12.600000000000001px;color:#ffffff;font-weight:700;transform:scaleX(0.7047);">EBEBEB</span>
<span class="t" style="left:1023.7px;top:244.75px;font-size:7.8px;line-height:11.7px;color:#d0d0d0;font-weight:500;transform:scaleX(0.8689);">不透明度</span>
<svg style="left:1026px;top:257px" width="11" height="11" viewBox="0 0 11 11"><defs><radialGradient id="gop"><stop offset="0" stop-color="#f9c9a4"/><stop offset="0.55" stop-color="#fbd9c0"/><stop offset="1" stop-color="#fde6d6"/></radialGradient></defs><circle cx="5.3" cy="5.2" r="4.5" fill="url(#gop)"/></svg>
<div class="a" style="left:1042.5px;top:260.3px;width:95px;height:6.6px;border-radius:3.3px;background:linear-gradient(90deg,#ffffff 0%,#f2eae2 7%,#c4bcb4 25%,#908a84 50%,#605e5c 75%,#404040 100%)"></div>
<svg style="left:1131.7px;top:257.3px" width="12" height="12" viewBox="0 0 12 12"><circle cx="6" cy="6" r="3.6" fill="#2c2c2c" stroke="#f6f6f6" stroke-width="1.6"/></svg>
<div class="a" style="left:1148.3px;top:255px;width:28.5px;height:12.8px;background:#242424;"></div>
<span class="t" style="left:1151.8px;top:255.70px;font-size:8.8px;line-height:13.200000000000001px;color:#ffffff;font-weight:700;transform:scaleX(0.8255);">100 %</span>
<div class="a" style="left:1178.3px;top:255px;width:10.5px;height:12.8px;background:#4c4c4c;"></div>
<svg style="left:1179.5px;top:257.2px" width="8" height="8" viewBox="0 0 8 8"><path d="M1.7999999999999998 2.9 L4 5.1 L6.2 2.9" fill="none" stroke="#e6e6e6" stroke-width="1.2" stroke-linecap="round" stroke-linejoin="round"/></svg>
<div class="a" style="left:1011.8px;top:272.5px;width:188.2px;height:3px;background:#1d1d1d;"></div>
<div class="a" style="left:1011.8px;top:275px;width:188.2px;height:20.5px;background:#262626;"></div>
<div class="a" style="left:1015.8px;top:278.3px;width:3px;height:13.5px;background:#3c3c3c;border-radius:1px"></div>
<div class="a" style="left:1025px;top:277.5px;width:29px;height:14.5px;background:#3a3a3a;border-radius:3px"></div>
<span class="t" style="left:1028px;top:278.20px;font-size:8.8px;line-height:13.200000000000001px;color:#ffffff;font-weight:700;transform:scaleX(0.6383);">レイヤー</span>
<span class="t" style="left:1058px;top:278.20px;font-size:8.8px;line-height:13.200000000000001px;color:#ededed;font-weight:700;transform:scaleX(0.6619);">パスブラシ</span>
<span class="t" style="left:1095.3px;top:278.20px;font-size:8.8px;line-height:13.200000000000001px;color:#ededed;font-weight:700;transform:scaleX(0.6611);">クイックFX</span>
<span class="t" style="left:1132.8px;top:278.20px;font-size:8.8px;line-height:13.200000000000001px;color:#ededed;font-weight:700;transform:scaleX(0.6874);">スタイル</span>
<svg style="left:1185.6px;top:279px" width="12" height="11" viewBox="0 0 12 11"><rect x="0.7" y="0.7" width="10.6" height="9.6" rx="2" fill="#1c1c1c" stroke="#e4e4e4" stroke-width="1.3"/><path d="M3.2 3.7 L6 7.2 L8.8 3.7" fill="none" stroke="#f2f2f2" stroke-width="1.5" stroke-linecap="round" stroke-linejoin="round"/></svg>
<div class="a" style="left:1011.8px;top:295.5px;width:188.2px;height:23px;background:#3a3a3a;"></div>
<div class="a" style="left:1055px;top:300.3px;width:38px;height:14.2px;background:#363636;border-radius:1px"></div>
<div class="a" style="left:1098px;top:300.3px;width:66.5px;height:14.2px;background:#363636;border-radius:1px"></div>
<span class="t" style="left:1020px;top:301.80px;font-size:8px;line-height:12.0px;color:#707070;font-weight:500;transform:scaleX(0.8763);">不透明度:</span>
<span class="t" style="left:1059px;top:301.30px;font-size:8.4px;line-height:12.600000000000001px;color:#9a9a9a;font-weight:700;transform:scaleX(0.8589);">100 %</span>
<svg style="left:1085.2px;top:303.6px" width="8" height="8" viewBox="0 0 8 8"><path d="M1.7999999999999998 2.9 L4 5.1 L6.2 2.9" fill="none" stroke="#8a8a8a" stroke-width="1.1" stroke-linecap="round" stroke-linejoin="round"/></svg>
<span class="t" style="left:1101.7px;top:301.80px;font-size:8px;line-height:12.0px;color:#929292;font-weight:500;transform:scaleX(0.8937);">標準</span>
<svg style="left:1155.4px;top:303.6px" width="8" height="8" viewBox="0 0 8 8"><path d="M1.7999999999999998 2.9 L4 5.1 L6.2 2.9" fill="none" stroke="#8a8a8a" stroke-width="1.1" stroke-linecap="round" stroke-linejoin="round"/></svg>
<svg style="left:1168.5px;top:303px" width="9" height="9" viewBox="0 0 9 9"><path d="M7.01 3.42 L8.47 3.90 L8.47 4.90 L7.01 5.38 L6.94 5.55 L7.63 6.92 L6.92 7.63 L5.55 6.94 L5.38 7.01 L4.90 8.47 L3.90 8.47 L3.42 7.01 L3.25 6.94 L1.88 7.63 L1.17 6.92 L1.86 5.55 L1.79 5.38 L0.33 4.90 L0.33 3.90 L1.79 3.42 L1.86 3.25 L1.17 1.88 L1.88 1.17 L3.25 1.86 L3.42 1.79 L3.90 0.33 L4.90 0.33 L5.38 1.79 L5.55 1.86 L6.92 1.17 L7.63 1.88 L6.94 3.25 Z" fill="#f2f2f2" stroke="#f2f2f2" stroke-width="0.6" stroke-linejoin="round"/><circle cx="4.4" cy="4.4" r="1.3" fill="#3a3a3a"/></svg>
<svg style="left:1185.3px;top:302.6px" width="7" height="10" viewBox="0 0 7 10"><path d="M2 4.4 V3 A1.5 1.7 0 0 1 5 3 V4.4" fill="none" stroke="#f2f2f2" stroke-width="1.1"/><rect x="0.6" y="4" width="5.8" height="4.6" rx="0.7" fill="#f2f2f2"/></svg>
<div class="a" style="left:1011.8px;top:318.5px;width:188.2px;height:240px;background:#1f1f1f;"></div>
<div class="a" style="left:1011.8px;top:558.5px;width:188.2px;height:21.5px;background:#383838;"></div>
<svg style="left:1017px;top:563px" width="13" height="13" viewBox="0 0 13 13"><path d="M10.6 6.8 V10.8 Q10.6 11.6 9.8 11.6 H2 Q1.2 11.6 1.2 10.8 V3 Q1.2 2.2 2 2.2 H6.6" fill="none" stroke="#f0f0f0" stroke-width="1.2"/><path d="M5.4 7.6 L11 1.6 L12 2.6 L6.4 8.6 L5 9 Z" fill="none" stroke="#f0f0f0" stroke-width="1"/></svg>
<div class="a" style="left:1058.6px;top:564px;width:10.4px;height:10.4px;background:#f0f0f0;border-radius:1px"></div>
<span class="t" style="left:1060px;top:563.75px;font-size:7.4px;line-height:11.100000000000001px;color:#202020;font-weight:700;transform:scaleX(0.8251);">FX</span>
<svg style="left:1072.8px;top:564px" width="10.4" height="10.4" viewBox="0 0 10.4 10.4"><rect width="10.4" height="10.4" rx="1" fill="#f0f0f0"/><circle cx="5.2" cy="5.2" r="3" fill="#2e2e2e"/></svg>
<svg style="left:1087.6px;top:564px" width="9" height="10.4" viewBox="0 0 9 10.4"><path d="M0.4 0.4 H8.6 V1.6 Q6.2 3.6 6.2 5.2 Q6.2 6.8 8.6 8.8 V10 H0.4 V8.8 Q2.8 6.8 2.8 5.2 Q2.8 3.6 0.4 1.6 Z" fill="#f0f0f0"/></svg>
<svg style="left:1100.6px;top:563.6px" width="11.2" height="11.2" viewBox="0 0 11.2 11.2"><circle cx="5.6" cy="5.6" r="4.8" fill="#2e2e2e" stroke="#f0f0f0" stroke-width="1.3"/><path d="M9.2 2.4 A4.8 4.8 0 0 1 2.2 9 Z" fill="#f0f0f0"/></svg>
<svg style="left:1140px;top:564px" width="10.4" height="10.4" viewBox="0 0 10.4 10.4"><rect x="0.6" y="0.6" width="9.2" height="9.2" fill="#2e2e2e" stroke="#f0f0f0" stroke-width="1.2"/><circle cx="4.4" cy="4.4" r="2.4" fill="#f0f0f0"/><circle cx="6.4" cy="6.4" r="2.4" fill="#bcbcbc"/></svg>
<svg style="left:1154px;top:564px" width="11" height="10.4" viewBox="0 0 11 10.4"><path d="M0.7 9.6 V1.4 Q0.7 0.7 1.4 0.7 H4.4 L5.6 2.3 H9.6 Q10.3 2.3 10.3 3 V9.6 Z" fill="none" stroke="#c4c4c4" stroke-width="1.1"/></svg>
<svg style="left:1168.5px;top:564px" width="10" height="10" viewBox="0 0 10 10"><rect x="0" y="0" width="2" height="2" fill="#f0f0f0"/><rect x="4" y="0" width="2" height="2" fill="#f0f0f0"/><rect x="8" y="0" width="2" height="2" fill="#f0f0f0"/><rect x="2" y="2" width="2" height="2" fill="#f0f0f0"/><rect x="6" y="2" width="2" height="2" fill="#f0f0f0"/><rect x="0" y="4" width="2" height="2" fill="#f0f0f0"/><rect x="4" y="4" width="2" height="2" fill="#f0f0f0"/><rect x="8" y="4" width="2" height="2" fill="#f0f0f0"/><rect x="2" y="6" width="2" height="2" fill="#f0f0f0"/><rect x="6" y="6" width="2" height="2" fill="#f0f0f0"/><rect x="0" y="8" width="2" height="2" fill="#f0f0f0"/><rect x="4" y="8" width="2" height="2" fill="#f0f0f0"/><rect x="8" y="8" width="2" height="2" fill="#f0f0f0"/></svg>
<svg style="left:1183.8px;top:563.6px" width="8.4" height="11" viewBox="0 0 8.4 11"><path d="M0.6 2.4 H7.8 M2.8 2.2 V1 H5.6 V2.2 M1.4 2.6 L1.9 10.2 H6.5 L7 2.6" fill="none" stroke="#9a9a9a" stroke-width="1.1"/><path d="M3.2 4.4 V8.6 M5.2 4.4 V8.6" stroke="#9a9a9a" stroke-width="0.8"/></svg>
<div class="a" style="left:1011.8px;top:580px;width:188.2px;height:2.5px;background:#1d1d1d;"></div>
<div class="a" style="left:1011.8px;top:582px;width:188.2px;height:20px;background:#262626;"></div>
<div class="a" style="left:1015.8px;top:585.5px;width:3px;height:13.5px;background:#3c3c3c;border-radius:1px"></div>
<div class="a" style="left:1025px;top:585.5px;width:21.5px;height:13.5px;background:#3a3a3a;border-radius:3px"></div>
<span class="t" style="left:1028.5px;top:585.85px;font-size:8.6px;line-height:12.899999999999999px;color:#ffffff;font-weight:700;transform:scaleX(0.8661);">変形</span>
<span class="t" style="left:1050.5px;top:585.70px;font-size:8.8px;line-height:13.200000000000001px;color:#ededed;font-weight:700;transform:scaleX(0.6591);">ナビゲータ</span>
<span class="t" style="left:1086.6px;top:585.85px;font-size:8.6px;line-height:12.899999999999999px;color:#d8d8d8;font-weight:700;transform:scaleX(0.8952);">履歴</span>
<svg style="left:1185.8px;top:586.8px" width="12" height="11" viewBox="0 0 12 11"><rect x="0.7" y="0.7" width="10.6" height="9.6" rx="2" fill="#1c1c1c" stroke="#e4e4e4" stroke-width="1.3"/><path d="M3.2 3.7 L6 7.2 L8.8 3.7" fill="none" stroke="#f2f2f2" stroke-width="1.5" stroke-linecap="round" stroke-linejoin="round"/></svg>
<div class="a" style="left:1011.8px;top:602px;width:188.2px;height:95px;background:#383838;"></div>
<svg style="left:1023px;top:626.5px" width="28" height="28" viewBox="0 0 28 28"><rect x="2.4" y="2.4" width="22.6" height="22.6" fill="#6a6a6a"/><g fill="#6a6a6a"><rect x="0.6" y="0.6" width="4" height="4"/><rect x="11.6" y="0.6" width="4" height="4"/><rect x="22.8" y="0.6" width="4" height="4"/><rect x="0.6" y="11.6" width="4" height="4"/><rect x="22.8" y="11.6" width="4" height="4"/><rect x="0.6" y="22.8" width="4" height="4"/><rect x="11.6" y="22.8" width="4" height="4"/><rect x="22.8" y="22.8" width="4" height="4"/></g></svg>
<div class="a" style="left:1070px;top:613.0px;width:45.5px;height:12.6px;background:#333333;border-radius:1px"></div>
<span class="t" style="left:1059.8px;top:613.45px;font-size:7.8px;line-height:11.7px;color:#747474;font-weight:700;transform:scaleX(0.8593);">X:</span>
<span class="t" style="left:1073.6px;top:613.45px;font-size:7.8px;line-height:11.7px;color:#a4a4a4;font-weight:700;transform:scaleX(0.9718);">0 mm</span>
<div class="a" style="left:1070px;top:629.9000000000001px;width:45.5px;height:12.6px;background:#333333;border-radius:1px"></div>
<span class="t" style="left:1059.8px;top:630.35px;font-size:7.8px;line-height:11.7px;color:#747474;font-weight:700;transform:scaleX(0.9281);">Y:</span>
<span class="t" style="left:1073.6px;top:630.35px;font-size:7.8px;line-height:11.7px;color:#a4a4a4;font-weight:700;transform:scaleX(0.9718);">0 mm</span>
<div class="a" style="left:1135.5px;top:613.0px;width:46px;height:12.6px;background:#333333;border-radius:1px"></div>
<span class="t" style="left:1123.4px;top:613.45px;font-size:7.8px;line-height:11.7px;color:#747474;font-weight:700;transform:scaleX(0.9768);">W:</span>
<span class="t" style="left:1139.3px;top:613.45px;font-size:7.8px;line-height:11.7px;color:#a4a4a4;font-weight:700;transform:scaleX(0.9669);">0 mm</span>
<div class="a" style="left:1135.5px;top:629.9000000000001px;width:46px;height:12.6px;background:#333333;border-radius:1px"></div>
<span class="t" style="left:1125px;top:630.35px;font-size:7.8px;line-height:11.7px;color:#747474;font-weight:700;transform:scaleX(0.9715);">H:</span>
<span class="t" style="left:1139.3px;top:630.35px;font-size:7.8px;line-height:11.7px;color:#a4a4a4;font-weight:700;transform:scaleX(0.9669);">0 mm</span>
<div class="a" style="left:1070px;top:651.6px;width:45.5px;height:12.6px;background:#333333;border-radius:1px"></div>
<span class="t" style="left:1059.8px;top:652.05px;font-size:7.8px;line-height:11.7px;color:#747474;font-weight:700;transform:scaleX(0.8137);">R:</span>
<span class="t" style="left:1073.6px;top:652.05px;font-size:7.8px;line-height:11.7px;color:#a4a4a4;font-weight:700;transform:scaleX(1.0805);">0 °</span>
<div class="a" style="left:1135.5px;top:651.6px;width:46px;height:12.6px;background:#333333;border-radius:1px"></div>
<span class="t" style="left:1127px;top:652.05px;font-size:7.8px;line-height:11.7px;color:#747474;font-weight:700;transform:scaleX(0.7695);">S:</span>
<span class="t" style="left:1139.3px;top:652.05px;font-size:7.8px;line-height:11.7px;color:#a4a4a4;font-weight:700;transform:scaleX(1.0701);">0 °</span>
<svg style="left:1106.5px;top:653.6px" width="8" height="8" viewBox="0 0 8 8"><path d="M1.7999999999999998 2.9 L4 5.1 L6.2 2.9" fill="none" stroke="#b0b0b0" stroke-width="1.1" stroke-linecap="round" stroke-linejoin="round"/></svg>
<svg style="left:1172.8px;top:653.6px" width="8" height="8" viewBox="0 0 8 8"><path d="M1.7999999999999998 2.9 L4 5.1 L6.2 2.9" fill="none" stroke="#b0b0b0" stroke-width="1.1" stroke-linecap="round" stroke-linejoin="round"/></svg>
<svg style="left:1189px;top:619.4px" width="7" height="16" viewBox="0 0 7 16"><path d="M1.2 7 V2 Q1.2 1 2.2 1 H4.6 Q5.6 1 5.6 2 V7 M1.2 8.8 V13.8 Q1.2 14.8 2.2 14.8 H4.6 Q5.6 14.8 5.6 13.8 V8.8" fill="none" stroke="#e0e0e0" stroke-width="1.2"/></svg>
<svg style="left:1153px;top:673.6px" width="13" height="12" viewBox="0 0 13 12"><rect x="2.6" y="0.8" width="9.4" height="9.4" rx="0.8" fill="none" stroke="#6c6c6c" stroke-width="1"/><rect x="0.6" y="5" width="6.4" height="6.4" rx="0.8" fill="#7a7a7a"/></svg>
<svg style="left:1172px;top:676px" width="8" height="8" viewBox="0 0 8 8"><path d="M1.7999999999999998 2.9 L4 5.1 L6.2 2.9" fill="none" stroke="#e0e0e0" stroke-width="1.2" stroke-linecap="round" stroke-linejoin="round"/></svg>
<!-- status -->
<svg style="left:5px;top:703.4px" width="8" height="8" viewBox="0 0 8 8"><path d="M1 0.6 V7.4" stroke="#8c8c8c" stroke-width="1.2"/><path d="M7.4 0.6 L2.4 4 L7.4 7.4 Z" fill="#8c8c8c"/></svg>
<svg style="left:18.6px;top:703.4px" width="6" height="8" viewBox="0 0 6 8"><path d="M5.6 0.6 L0.6 4 L5.6 7.4 Z" fill="#8c8c8c"/></svg>
<span class="t" style="left:48.6px;top:701.00px;font-size:8.4px;line-height:12.600000000000001px;color:#f0f0f0;font-weight:700;transform:scaleX(0.9450);">1 / 1</span>
<svg style="left:88px;top:703.4px" width="6" height="8" viewBox="0 0 6 8"><path d="M0.6 0.4 L5.8 4 L0.6 7.6 Z" fill="#ececec"/></svg>
<svg style="left:100.5px;top:703.4px" width="8" height="8" viewBox="0 0 8 8"><path d="M0.6 0.6 L5.6 4 L0.6 7.4 Z" fill="#8c8c8c"/><path d="M7 0.6 V7.4" stroke="#8c8c8c" stroke-width="1.2"/></svg>
<svg style="left:114px;top:702.2px" width="9" height="10" viewBox="0 0 9 10"><rect x="0.8" y="0.8" width="7.4" height="8.4" rx="1" fill="none" stroke="#767676" stroke-width="1.1"/><path d="M2.4 3 H6.6 M2.4 5 H6.6" stroke="#767676" stroke-width="0.9"/></svg>
<svg style="left:128.3px;top:701.6px" width="11" height="11" viewBox="0 0 11 11"><rect x="0.8" y="0.8" width="6.6" height="7.4" rx="1" fill="#3f3f3f" stroke="#e6e6e6" stroke-width="1.2"/><path d="M4 10.2 H9.4 Q10.2 10.2 10.2 9.4 V3.6" fill="none" stroke="#e6e6e6" stroke-width="1.2"/><path d="M2.6 3.4 H5.6 M2.6 5.4 H5.6" stroke="#e6e6e6" stroke-width="0.8"/></svg>
<span class="t" style="left:153.2px;top:700.98px;font-size:8.3px;line-height:12.450000000000001px;color:#ffffff;font-weight:700;transform:scaleX(0.7258);">ドラッグ</span>
<span class="t" style="left:177.7px;top:700.98px;font-size:8.3px;line-height:12.450000000000001px;color:#b4b4b4;font-weight:400;transform:scaleX(0.7777);">でマーキー選択します。オブジェクトを</span>
<span class="t" style="left:295px;top:700.98px;font-size:8.3px;line-height:12.450000000000001px;color:#ffffff;font-weight:700;transform:scaleX(0.7439);">クリック</span>
<span class="t" style="left:320.1px;top:700.98px;font-size:8.3px;line-height:12.450000000000001px;color:#b4b4b4;font-weight:400;transform:scaleX(0.8414);">して選択します。マーキー選択中に</span>
<span class="t" style="left:432px;top:700.98px;font-size:8.3px;line-height:12.450000000000001px;color:#ffffff;font-weight:700;transform:scaleX(0.7783);">右クリック</span>
<span class="t" style="left:464.7px;top:700.98px;font-size:8.3px;line-height:12.450000000000001px;color:#b4b4b4;font-weight:400;transform:scaleX(0.8932);">して交差動作を切り替えます。</span>
<svg style="left:23px;top:716px" width="10" height="5" viewBox="0 0 10 5"><circle cx="4.6" cy="6" r="3.6" fill="#f3a6b4"/></svg>
</body>
</html>
